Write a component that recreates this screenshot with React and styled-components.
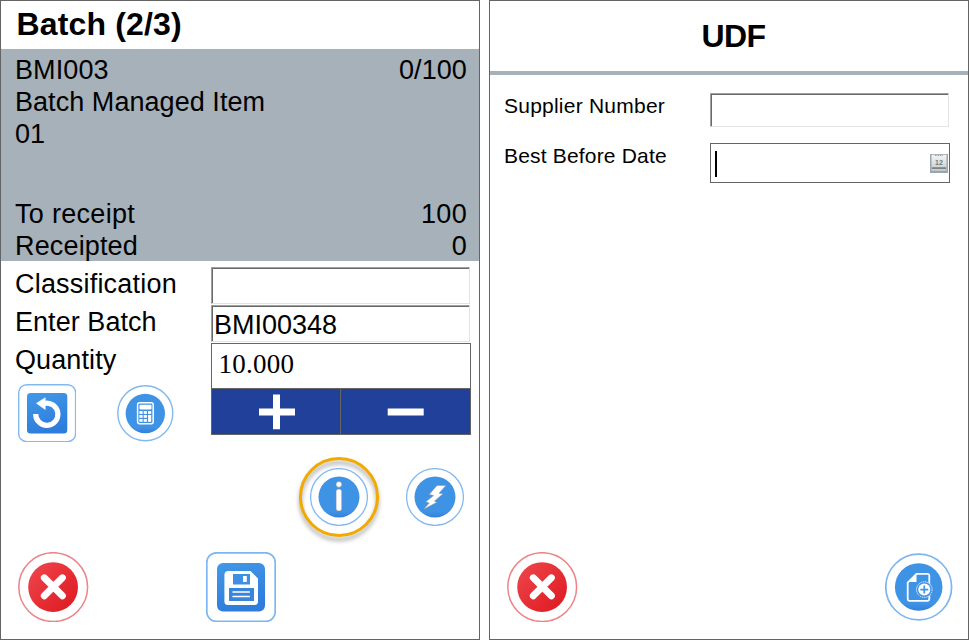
import React from "react";
import styled, { createGlobalStyle } from "styled-components";

const GlobalStyle = createGlobalStyle`
  * { box-sizing: border-box; }
  body {
    margin: 0;
    background: #fff;
    color: #000;
    font-family: "Liberation Sans", Arial, sans-serif;
  }
  svg { display: block; }
`;

const Screens = styled.main`
  display: flex;
  gap: 9px;
  width: 969px;
  height: 640px;
`;

const Panel = styled.section`
  display: flex;
  flex-direction: column;
  width: 480px;
  height: 640px;
  border: 1px solid #646464;
  background: #fff;
`;

const Title = styled.h1`
  margin: 0;
  height: 48px;
  padding-left: 15.5px;
  font-size: 32px;
  line-height: 46px;
  letter-spacing: 0.15px;
`;

const CenteredTitle = styled.h1`
  margin: 0;
  height: 74px;
  padding-left: 9px;
  border-bottom: 4px solid #a7b1b9;
  font-size: 32px;
  line-height: 70px;
  letter-spacing: -0.6px;
  text-align: center;
`;

const Summary = styled.div`
  display: flex;
  flex-direction: column;
  gap: 48px;
  height: 212px;
  padding: 5px 12px 0 14px;
  background: #a7b1b9;
  font-size: 27px;
  line-height: 32px;
`;

const SummaryGroup = styled.div``;

const SummaryRow = styled.div`
  display: flex;
  justify-content: space-between;
  height: 32px;
  letter-spacing: ${(p) => p.$spacing || "0"};
`;

const BatchForm = styled.div`
  display: grid;
  grid-template-columns: 196px 260px;
  grid-template-rows: 38px 38px 99px;
  align-items: start;
  padding: 6px 0 0 14px;
`;

const Label = styled.div`
  font-size: 27px;
  line-height: 34px;
  letter-spacing: ${(p) => p.$spacing || "0.15px"};
`;

const TextField = styled.div`
  width: ${(p) => p.$width}px;
  height: ${(p) => p.$height}px;
  border: 1px solid;
  border-color: #a0a0a0 #e3e3e3 #e3e3e3 #a0a0a0;
  box-shadow: inset 1px 1px 0 #696969;
  padding: 4px 0 0 2px;
  font-size: 27px;
  line-height: 30px;
`;

const Stepper = styled.div`
  display: grid;
  grid-template-rows: 44px 1fr;
  height: 92px;
  border: 1px solid #646464;
`;

const StepperValue = styled.div`
  padding: 5px 0 0 6.5px;
  font-family: "Liberation Serif", "Times New Roman", serif;
  font-size: 27px;
  line-height: 30px;
  letter-spacing: 0.25px;
`;

const StepperButtons = styled.div`
  display: grid;
  grid-template-columns: 128px 1fr;
  gap: 1px;
  border-top: 1px solid #646464;
  background: #646464;
`;

const StepButton = styled.button`
  display: flex;
  align-items: center;
  justify-content: center;
  padding: 0;
  border: 0;
  background: #214099;
`;

const IconButton = styled.button`
  flex: none;
  padding: 0;
  border: 0;
  background: none;
`;

const ToolRow = styled.div`
  display: flex;
  align-items: center;
  gap: 41px;
  padding: 7px 0 0 3px;
`;

const InfoRow = styled.div`
  display: flex;
  align-items: center;
  justify-content: flex-end;
  gap: 27px;
  margin-top: 15px;
  padding-right: 15px;
`;

const Highlight = styled.div`
  position: relative;
  display: flex;
  align-items: center;
  justify-content: center;
  width: 80px;
  height: 80px;

  &::before {
    content: "";
    position: absolute;
    inset: 0;
    border: 3px solid #f2a900;
    border-radius: 50%;
    filter: drop-shadow(0 4px 2px rgba(0, 0, 0, 0.35));
    pointer-events: none;
  }

  > button {
    position: relative;
  }
`;

const Footer = styled.footer`
  display: flex;
  align-items: center;
  justify-content: ${(p) => (p.$spread ? "space-between" : "flex-start")};
  gap: 117px;
  margin-top: auto;
  padding: 0 15px 17px 17px;
`;

const UdfForm = styled.div`
  display: grid;
  grid-template-columns: 206px 240px;
  grid-template-rows: 50px 40px;
  padding: 18px 0 0 14px;
`;

const UdfLabel = styled.div`
  font-size: 21px;
  line-height: 25px;
  letter-spacing: ${(p) => p.$spacing};
`;

const DateField = styled.div`
  display: flex;
  align-items: center;
  justify-content: space-between;
  height: 40px;
  padding: 1px 1px 0 4px;
  border: 1px solid #646464;
`;

const Caret = styled.span`
  width: 2px;
  height: 26px;
  margin-top: 1px;
  background: #000;
`;

function Gradients() {
  return (
    <defs>
      <linearGradient id="blue" x1="0" y1="0" x2="0.3" y2="1">
        <stop offset="0" stopColor="#4299e7" />
        <stop offset="1" stopColor="#2e7ddd" />
      </linearGradient>
      <linearGradient id="disc" x1="0" y1="0" x2="0" y2="1">
        <stop offset="0.85" stopColor="#3f93e5" />
        <stop offset="1" stopColor="#3280dc" />
      </linearGradient>
      <linearGradient id="red" x1="0" y1="0" x2="1" y2="1">
        <stop offset="0.1" stopColor="#ed4348" />
        <stop offset="0.9" stopColor="#df1c24" />
      </linearGradient>
    </defs>
  );
}

function UndoIcon() {
  return (
    <svg width="58" height="58" viewBox="0 0 58 58">
      <Gradients />
      <rect x="0.7" y="0.7" width="56.9" height="57" rx="8" fill="#fff" stroke="#81b9f0" strokeWidth="1.4" />
      <rect x="9" y="9" width="40.3" height="40.5" rx="3.5" fill="url(#blue)" />
      <path d="M17.7 30A11.1 11.1 0 1 0 26.5 19.4" fill="none" stroke="#fff" strokeWidth="5.2" />
      <path d="M18.5 19.3L27.2 13.8V25.5Z" fill="#fff" stroke="#fff" strokeWidth="0.6" />
    </svg>
  );
}

function CalculatorIcon() {
  return (
    <svg width="57" height="57" viewBox="0 0 57 57">
      <circle cx="28.3" cy="28.3" r="27.5" fill="#fff" stroke="#81b9f0" strokeWidth="1.4" />
      <circle cx="28.3" cy="28.5" r="19.7" fill="url(#disc)" />
      <rect x="20.6" y="17.8" width="15.6" height="21" rx="2" fill="none" stroke="#fff" strokeWidth="1.5" />
      <rect x="22.5" y="19.8" width="12" height="4.8" rx="1" fill="#fff" />
      <g fill="#fff">
        <rect x="22.4" y="26.1" width="3.2" height="2.8" />
        <rect x="26.7" y="26.1" width="3.2" height="2.8" />
        <rect x="31" y="26.1" width="3.2" height="2.8" />
        <rect x="22.4" y="30" width="3.2" height="2.8" />
        <rect x="26.7" y="30" width="3.2" height="2.8" />
        <rect x="22.4" y="34" width="3.2" height="2.8" />
        <rect x="26.7" y="34" width="3.2" height="2.8" />
        <rect x="31" y="30" width="3.2" height="6.8" />
      </g>
    </svg>
  );
}

function RoundIcon({ children }) {
  return (
    <svg width="58" height="58" viewBox="0 0 58 58">
      <circle cx="29" cy="29" r="28.4" fill="#fff" stroke="#81b9f0" strokeWidth="1.3" />
      <circle cx="29" cy="29" r="20.5" fill="url(#disc)" />
      {children}
    </svg>
  );
}

function InfoIcon() {
  return (
    <RoundIcon>
      <g fill="#fff" stroke="#8a8e92" strokeWidth="0.5">
        <circle cx="28.9" cy="16.4" r="2.8" />
        <rect x="26.1" y="21" width="5.6" height="22" rx="2.6" />
      </g>
    </RoundIcon>
  );
}

function BoltIcon() {
  return (
    <RoundIcon>
      <path
        d="M31 17.4H40L33 25.2L37 25.8L28.4 33.2L31 34.2L17.7 41.3L23.2 35L19.8 33.8L27.6 27.6L23.2 26.4Z"
        fill="#fff"
        stroke="#8a8e92"
        strokeWidth="0.5"
      />
    </RoundIcon>
  );
}

function CancelIcon() {
  return (
    <svg width="71" height="70" viewBox="0 0 71 70">
      <circle cx="35.2" cy="35.1" r="34.4" fill="#fff" stroke="#ec8388" strokeWidth="1.5" />
      <circle cx="35.1" cy="35.1" r="24.9" fill="url(#red)" />
      <path d="M26.3 25.8L44.4 43.8M44.4 25.8L26.3 43.8" fill="none" stroke="#fff" strokeWidth="6.9" strokeLinecap="round" />
    </svg>
  );
}

function SaveIcon() {
  return (
    <svg width="70" height="70" viewBox="0 0 70 70">
      <rect x="0.8" y="0.8" width="68.4" height="68.6" rx="9.5" fill="#fff" stroke="#7db6f0" strokeWidth="1.7" />
      <rect x="11" y="11" width="48" height="48.6" rx="6" fill="url(#blue)" />
      <path d="M22.4 19H44.5L52 26.5V49.5A3.6 3.6 0 0 1 48.4 53H22A3.6 3.6 0 0 1 18.4 49.5V23A4 4 0 0 1 22.4 19Z" fill="#fff" />
      <rect x="27" y="22" width="17" height="10.5" fill="#3f8fe3" />
      <rect x="37" y="24" width="3.8" height="6" fill="#fff" />
      <rect x="23" y="36" width="25" height="13" fill="#3885df" />
      <path d="M27 40.1H43.3M27 44.4H43.3" stroke="#fff" strokeWidth="1.5" strokeLinecap="round" />
    </svg>
  );
}

function AddDocumentIcon() {
  return (
    <svg width="68" height="68" viewBox="0 0 68 68">
      <circle cx="33.7" cy="34" r="32.9" fill="#fff" stroke="#7db6f0" strokeWidth="1.7" />
      <circle cx="33.7" cy="34" r="23.8" fill="url(#disc)" />
      <path d="M31.5 20.9H42.5A1.8 1.8 0 0 1 44.3 22.7V46A1.8 1.8 0 0 1 42.5 47.8H24.5A1.8 1.8 0 0 1 22.7 46V29.6Z" fill="none" stroke="#fff" strokeWidth="1.8" strokeLinejoin="round" />
      <path d="M31.5 20.9V29H22.7Z" fill="#fff" />
      <circle cx="39.3" cy="36.6" r="8" fill="#3f93e5" />
      <circle cx="39.3" cy="36.6" r="7.8" fill="none" stroke="#fff" strokeWidth="0.8" strokeDasharray="1.5 0.7" />
      <circle cx="39.3" cy="36.6" r="6" fill="#fff" />
      <path d="M39.3 32.6V40.6M35.3 36.6H43.3" stroke="#3f93e5" strokeWidth="1.7" />
    </svg>
  );
}

function PlusIcon() {
  return (
    <svg width="37" height="36" viewBox="0 0 37 36">
      <path d="M15 0.5H22V14.5H37V21.5H22V35.3H15V21.5H1V14.5H15Z" fill="#fff" />
    </svg>
  );
}

function MinusIcon() {
  return (
    <svg width="37" height="36" viewBox="0 0 37 36">
      <rect x="0.7" y="14.5" width="36" height="7" fill="#fff" />
    </svg>
  );
}

function CalendarIcon() {
  return (
    <svg width="18" height="19" viewBox="0 0 18 19">
      <defs>
        <linearGradient id="page" x1="0" y1="0" x2="0" y2="1">
          <stop offset="0" stopColor="#f4f4f4" />
          <stop offset="1" stopColor="#c9cbcc" />
        </linearGradient>
      </defs>
      <rect width="18" height="19" fill="#9ba7b0" />
      <rect x="1.5" y="0.8" width="15" height="16" fill="url(#page)" />
      <path d="M5 1.5H13" stroke="#999" strokeWidth="1" strokeDasharray="1.5 1" />
      <rect x="2" y="13.2" width="14" height="1.8" fill="#7c8387" />
      <text x="9" y="10.5" textAnchor="middle" fontSize="7" fontWeight="bold" fontFamily="Liberation Sans, sans-serif" fill="#73787c">12</text>
    </svg>
  );
}

export default function App() {
  return (
    <>
      <GlobalStyle />
      <Screens>
        <Panel>
          <Title>Batch (2/3)</Title>
          <Summary>
            <SummaryGroup>
              <SummaryRow $spacing="0.1px"><span>BMI003</span><span>0/100</span></SummaryRow>
              <SummaryRow $spacing="0.05px">Batch Managed Item</SummaryRow>
              <SummaryRow>01</SummaryRow>
            </SummaryGroup>
            <SummaryGroup>
              <SummaryRow $spacing="0.3px"><span>To receipt</span><span>100</span></SummaryRow>
              <SummaryRow $spacing="0.15px"><span>Receipted</span><span>0</span></SummaryRow>
            </SummaryGroup>
          </Summary>
          <BatchForm>
            <Label $spacing="0.2px">Classification</Label>
            <TextField $width={259} $height={37} />
            <Label $spacing="0.05px">Enter Batch</Label>
            <TextField $width={259} $height={37}>BMI00348</TextField>
            <div>
              <Label $spacing="0.1px">Quantity</Label>
              <ToolRow>
                <IconButton aria-label="Undo"><UndoIcon /></IconButton>
                <IconButton aria-label="Calculator"><CalculatorIcon /></IconButton>
              </ToolRow>
            </div>
            <Stepper>
              <StepperValue>10.000</StepperValue>
              <StepperButtons>
                <StepButton aria-label="Increase"><PlusIcon /></StepButton>
                <StepButton aria-label="Decrease"><MinusIcon /></StepButton>
              </StepperButtons>
            </Stepper>
          </BatchForm>
          <InfoRow>
            <Highlight>
              <IconButton aria-label="Information"><InfoIcon /></IconButton>
            </Highlight>
            <IconButton aria-label="Quick action"><BoltIcon /></IconButton>
          </InfoRow>
          <Footer>
            <IconButton aria-label="Cancel"><CancelIcon /></IconButton>
            <IconButton aria-label="Save"><SaveIcon /></IconButton>
          </Footer>
        </Panel>
        <Panel>
          <CenteredTitle>UDF</CenteredTitle>
          <UdfForm>
            <UdfLabel $spacing="0.23px">Supplier Number</UdfLabel>
            <TextField $width={239} $height={34} />
            <UdfLabel $spacing="0.18px">Best Before Date</UdfLabel>
            <DateField>
              <Caret />
              <CalendarIcon />
            </DateField>
          </UdfForm>
          <Footer $spread>
            <IconButton aria-label="Cancel"><CancelIcon /></IconButton>
            <IconButton aria-label="Add document"><AddDocumentIcon /></IconButton>
          </Footer>
        </Panel>
      </Screens>
    </>
  );
}
